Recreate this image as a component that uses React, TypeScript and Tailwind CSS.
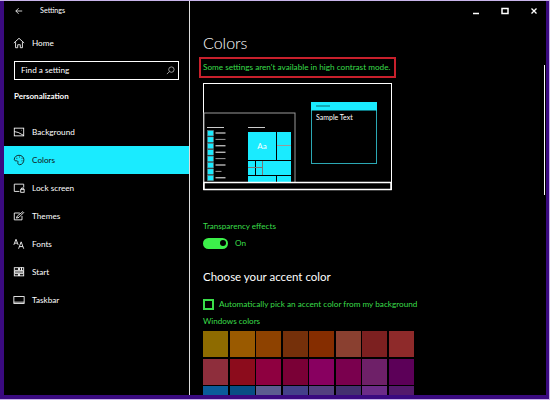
import React from "react";

const swatches = [
	["#8e6b00", "#9a5a00", "#8e4200", "#75300a", "#852d00", "#8a4030", "#7c2020", "#8e2a2a"],
	["#8e2e3c", "#8c0c1c", "#8e0040", "#7a0036", "#880060", "#7a004e", "#6e2068", "#5c0058"],
	["#0a5c9a", "#084e84", "#5c5c90", "#44408a", "#544080", "#443070", "#6c2c88", "#541a6c"],
];

const icons: Record<string, React.ReactNode> = {
	home: <path d="M1 7 7 1.5 13 7M3 6v6.5h2.5V9h3v3.500H11V6" />,
	background: (
		<>
			<rect x="1.5" y="2.5" width="11" height="9" />
			<path d="M1.5 6.5 6 7.5l6.500 3.500M9.500 5h.5" />
		</>
	),
	colors: (
		<path d="M7 1.5c-3 0-5.500 2-5.500 4.800 0 1.500 1.500 1.800 3 1.700 1.300 0 1.500 1 1.200 2-.3 1.300.5 2.500 2 2.500 3 0 5-2.700 5-5.800 0-3-2.500-5.200-5.700-5.200ZM4 5h1M7 3.500h1M10 5h1M10 8h1" />
	),
	lock: (
		<>
			<path d="M12.5 6.500V2.500h-11v8.500h6" />
			<rect x="9" y="8.5" width="4" height="3.5" />
			<path d="M10 8.500V7h2v1.500" />
		</>
	),
	themes: (
		<>
			<path d="M8 3.500H1.500v8h9V7" />
			<path d="M4 9.500 5 7l6.500-5 1 1L7 8.500Z" />
		</>
	),
	fonts: (
		<>
			<path d="M1 8 3.500 1.500 6 8M2 6h3" />
			<path d="M6.500 12.500 9.500 4.500l3 8M7.500 10h4" />
		</>
	),
	start: (
		<>
			<rect x="1.5" y="2" width="5" height="3" />
			<rect x="7.5" y="2" width="2.5" height="3" />
			<rect x="10" y="2" width="2.5" height="3" />
			<rect x="1.5" y="6" width="11" height="2" />
			<rect x="1.5" y="9" width="5" height="2.5" />
			<rect x="7.5" y="9" width="5" height="2.5" />
		</>
	),
	taskbar: (
		<>
			<rect x="1" y="3" width="12" height="8" />
			<path d="M1 9.500h12" />
		</>
	),
};

const NavIcon: React.FC<{ name: string; dark?: boolean }> = ({ name, dark }) => (
	<svg
		viewBox="0 0 14 14"
		fill="none"
		stroke="currentColor"
		strokeWidth="1"
		className={`h-[12px] w-[12px] ${dark ? "text-[#111]" : "text-white"}`}
	>
		{icons[name]}
	</svg>
);

const NavItem: React.FC<{ name: string; label: string; active?: boolean }> = ({ name, label, active }) => (
	<div
		className={`flex h-[28px] items-center gap-[7px] pl-[9px] text-[8.2px] ${
			active ? "bg-[#1aebff] text-[#111]" : "text-white"
		}`}
	>
		<NavIcon name={name} dark={active} />
		<span>{label}</span>
	</div>
);

// little start menu and sample window
const Preview: React.FC = () => {
	const cyan = "#1aebff";
	const rows = [0, 1, 2, 3, 4, 5, 6, 7];
	const bars = ["#fff", "#999", "#fff", "#fff", "#999", "#fff", "#999", "#fff"];
	const barWidths = [10, 10, 10, 10, 10, 10, 6, 10];
	return (
		<svg viewBox="0 0 189 108" className="block h-[108px] w-[189px]" fill="none">
			<rect x="0.5" y="0.5" width="188" height="106" stroke="#fff" />
			<rect x="1" y="30" width="91" height="70" stroke="#999" />
			<rect x="4" y="44" width="17" height="1" fill="#ccc" />
			{rows.map((r, i) => (
				<g key={r}>
					<rect x="4.5" y={47.5 + i * 6.4} width="6" height="5.4" fill={cyan} stroke="#777" strokeWidth="0.5" />
					<rect x="12.5" y={49.5 + i * 6.4} width={barWidths[i]} height="1" fill={bars[i]} />
				</g>
			))}
			<rect x="45" y="44" width="17" height="1" fill="#ccc" />
			<rect x="45" y="49" width="28" height="28" fill={cyan} />
			<rect x="74" y="49" width="14" height="28" fill={cyan} />
			<rect x="74" y="62" width="14" height="1" fill="#999" />
			<rect x="45" y="78" width="43" height="14" fill={cyan} />
			<rect x="52" y="78" width="1" height="14" fill="#000" />
			<rect x="59" y="78" width="1" height="14" fill="#777" />
			<rect x="45" y="84" width="14" height="1" fill="#777" />
			<rect x="45" y="93" width="28" height="7" fill={cyan} />
			<rect x="74" y="93" width="14" height="7" fill={cyan} />
			<text x="59" y="66" fill="#fff" fontSize="8" textAnchor="middle" fontFamily="Lato, sans-serif">
				Aa
			</text>
			<rect x="108.5" y="19.5" width="65" height="61" stroke="#2ba8b4" />
			<rect x="108" y="19" width="66" height="8.5" fill={cyan} />
			<rect x="113" y="22.5" width="14" height="1" fill="#0a6a70" />
			<text x="113" y="37" fill="#fff" fontSize="7" fontFamily="Lato, sans-serif">
				Sample Text
			</text>
			<rect x="1" y="99.5" width="187" height="7" stroke="#fff" strokeWidth="1.5" fill="#000" />
		</svg>
	);
};

export default function App() {
	return (
		<div
			className="h-[400px] w-[550px] overflow-hidden bg-[#c8b4ea] pb-[1.5px] pr-[1.5px] pt-px text-white"
			style={{ fontFamily: "Lato, 'Open Sans', sans-serif" }}
		>
			<div className="h-full w-full bg-[#3a0a80] pb-[4px] pl-[4px] pr-[3px]">
				<div className="relative flex h-full bg-black">
					{/* sidebar */}
					<aside className="flex w-[186px] shrink-0 flex-col border-r-[1.5px] border-[#ddd]">
						<div className="flex h-[20px] items-center pl-[11px] text-[7.2px]">
							<svg viewBox="0 0 10 10" fill="none" stroke="#fff" strokeWidth="1" className="h-[8px] w-[8px]">
								<path d="M9 5H1M4.500 1.500 1 5l3.500 3.500" />
							</svg>
							<span className="ml-[17px]">Settings</span>
						</div>
						<div className="mt-[8px] flex h-[28px] items-center gap-[7px] pl-[9px] text-[8.2px]">
							<NavIcon name="home" />
							<span>Home</span>
						</div>
						<div className="mx-[10px] mt-[4px] flex h-[19px] items-center justify-between border-[1.5px] border-white pl-[6px] pr-[3px] text-[8.2px]">
							<span>Find a setting</span>
							<svg viewBox="0 0 10 10" fill="none" stroke="#ccc" strokeWidth="0.8" className="h-[9px] w-[9px]">
								<circle cx="6" cy="4" r="3" />
								<path d="M3.800 6.200 1 9" />
							</svg>
						</div>
						<div className="mb-[15px] mt-[10px] pl-[10px] text-[8px] font-bold leading-[13px]">Personalization</div>
						<NavItem name="background" label="Background" />
						<NavItem name="colors" label="Colors" active />
						<NavItem name="lock" label="Lock screen" />
						<NavItem name="themes" label="Themes" />
						<NavItem name="fonts" label="Fonts" />
						<NavItem name="start" label="Start" />
						<NavItem name="taskbar" label="Taskbar" />
					</aside>

					{/* main */}
					<main className="flex-1 overflow-hidden pl-[13px]">
						<div className="flex h-[12px] items-start justify-end gap-[21px] pr-[8px] pt-[6px]">
							<svg viewBox="0 0 8 8" className="h-[8px] w-[8px]" fill="none" stroke="#fff" strokeWidth="1.5">
								<path d="M1 6.500h6" />
							</svg>
							<svg viewBox="0 0 8 8" className="h-[8px] w-[8px]" fill="none" stroke="#fff" strokeWidth="1.5">
								<rect x="1" y="1.5" width="6" height="5" />
							</svg>
							<svg viewBox="0 0 8 8" className="h-[8px] w-[8px]" fill="none" stroke="#fff" strokeWidth="1.3">
								<path d="m1.500 1.500 5 5M6.500 1.500l-5 5" />
							</svg>
						</div>
						<h1 className="mt-[18px] text-[16px] font-light leading-[24px]">Colors</h1>
						<div className="-ml-[4px] mt-[2px] flex h-[21px] w-[197px] items-center border-2 border-[#c8202c] pl-[2px] text-[8.2px] whitespace-nowrap text-[#3ade4a]">
							Some settings aren't available in high contrast mode.
						</div>
						<div className="mt-[5px]">
							<Preview />
						</div>
						<div className="mt-[29px] text-[8.1px] leading-[12px] text-[#3ade4a]">Transparency effects</div>
						<div className="mt-[5px] flex h-[12px] items-center gap-[7px]">
							<div className="flex h-[11px] w-[25px] items-center justify-end rounded-full bg-[#3cf04a] pr-[2px]">
								<div className="h-[6px] w-[6px] rounded-full bg-black" />
							</div>
							<span className="text-[8.2px] text-[#3ade4a]">On</span>
						</div>
						<h2 className="mt-[19px] text-[11.5px] leading-[18px]">Choose your accent color</h2>
						<div className="mt-[13px] flex h-[11px] items-center gap-[5px]">
							<div className="h-[11px] w-[11px] border-2 border-[#3ade4a]" />
							<span className="text-[8.2px] whitespace-nowrap text-[#3ade4a]">
								Automatically pick an accent color from my background
							</span>
						</div>
						<div className="mt-[5px] h-[12px] text-[8.1px] leading-[12px] text-[#3ade4a]">Windows colors</div>
						<div className="mt-[4px] grid w-[211px] grid-cols-8 gap-x-[1.2px] gap-y-[1.5px]">
							{swatches.flat().map((c, i) => (
								<div key={i} className="h-[26px]" style={{ backgroundColor: c }} />
							))}
						</div>
					</main>

					{/* scrollbar thumb */}
					<div className="absolute right-[1px] top-[64px] h-[130px] w-px bg-white" />
				</div>
			</div>
		</div>
	);
}
